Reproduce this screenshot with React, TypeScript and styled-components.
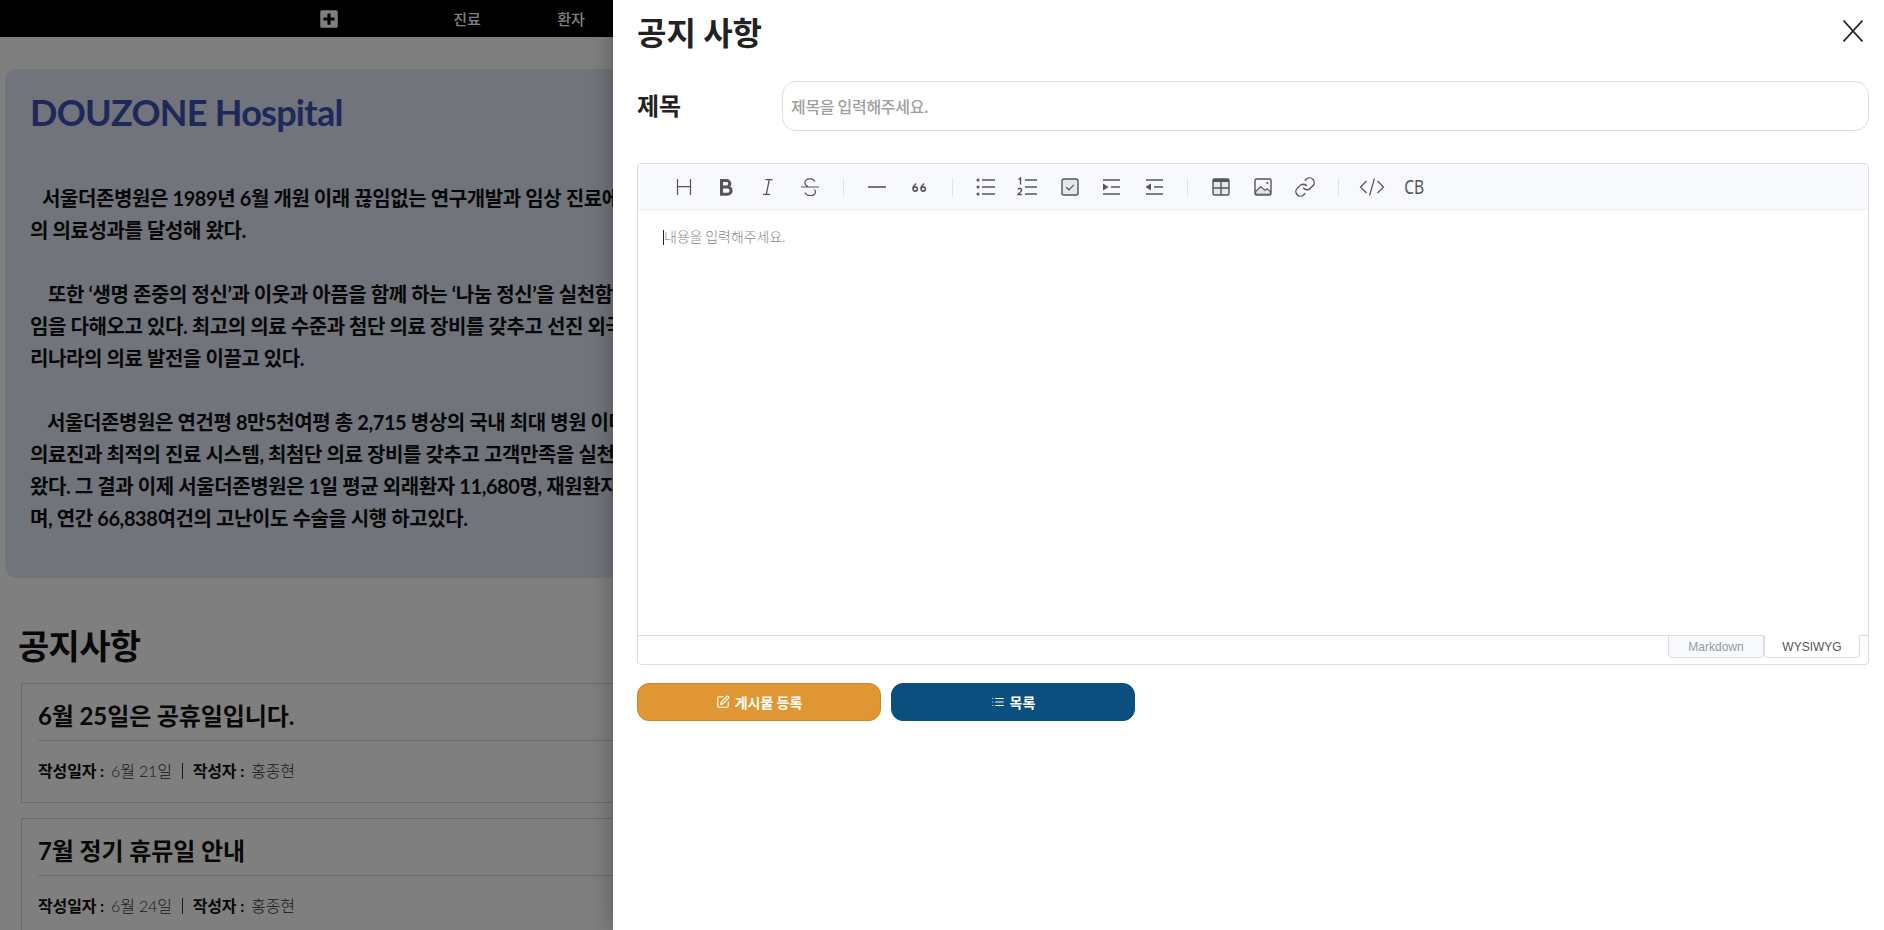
import React from 'react';
import styled, { createGlobalStyle } from 'styled-components';
import { FaPlusSquare } from 'react-icons/fa';
import { LuSquarePen, LuList } from 'react-icons/lu';

const GlobalStyle = createGlobalStyle`
  html, body {
    margin: 0;
    padding: 0;
    height: 100%;
    overflow: hidden;
    background: #fff;
    font-family: Lato, "Noto Sans CJK KR", sans-serif;
  }
  * {
    box-sizing: border-box;
  }
`;

const Screen = styled.div`
  position: relative;
  width: 1884px;
  height: 930px;
  overflow: hidden;
`;

const TopNav = styled.nav`
  display: flex;
  align-items: center;
  height: 37px;
  padding-left: 319px;
  background: #000;
  color: #fff;
`;

const NavLogo = styled.div`
  display: flex;
  margin-right: 76px;
  font-size: 20px;
`;

const NavItem = styled.a`
  width: 104px;
  text-align: center;
  font-size: 15px;
  font-weight: 500;
`;

const Main = styled.main`
  padding: 32px 0 0 5px;
`;

const IntroCard = styled.section`
  width: 1860px;
  height: 509px;
  padding: 21px 25px;
  border-radius: 12px;
  background: #e2e8f6;
`;

const IntroTitle = styled.h1`
  margin: 0 0 48px;
  font-size: 36px;
  line-height: 44px;
  font-weight: 700;
  letter-spacing: -0.75px;
  color: #3f51b5;
`;

const IntroText = styled.p<{ $indent: number }>`
  margin: 0 0 32px;
  font-size: 20px;
  line-height: 32px;
  font-weight: 700;
  letter-spacing: -0.4px;
  white-space: nowrap;
  color: #111;
  text-indent: ${(p) => p.$indent}px;
`;

const NoticeTitle = styled.h2`
  margin: 46px 0 15px 13px;
  font-size: 34px;
  line-height: 44px;
  font-weight: 700;
  letter-spacing: -0.7px;
  color: #111;
`;

const NoticeCard = styled.article`
  width: 1840px;
  height: 120px;
  margin: 0 0 15px 16px;
  padding: 13px 16px 0;
  border: 1px solid #d8d8d8;
  background: #fff;
`;

const NoticeHead = styled.h3`
  margin: 0;
  height: 44px;
  font-size: 24px;
  line-height: 38px;
  font-weight: 700;
  letter-spacing: -0.1px;
  color: #111;
  border-bottom: 1px solid #d8d8d8;
`;

const NoticeMeta = styled.div`
  display: flex;
  align-items: center;
  margin-top: 18px;
  font-size: 16px;
  line-height: 24px;
  font-weight: 300;
  letter-spacing: -0.15px;
  color: #333;
`;

const MetaLabel = styled.b`
  margin-right: 7px;
  font-weight: 700;
  color: #111;
`;

const MetaSep = styled.span`
  width: 1px;
  height: 16px;
  margin: 0 10px;
  background: #333;
`;

const Overlay = styled.div`
  position: absolute;
  inset: 0;
  background: rgba(0, 0, 0, 0.5);
`;

const Drawer = styled.aside`
  position: absolute;
  top: 0;
  right: 0;
  bottom: 0;
  width: 1271px;
  padding: 0 15px 0 24px;
  background: #fff;
  box-shadow: 0 0 24px rgba(0, 0, 0, 0.3);
  font-family: "Noto Sans CJK KR", sans-serif;
`;

const DrawerHead = styled.header`
  display: flex;
  align-items: center;
  justify-content: space-between;
  height: 62px;
  padding-right: 6px;
`;

const DrawerTitle = styled.h2`
  margin: 0;
  font-size: 32px;
  font-weight: 700;
  color: #222;
`;

const CloseButton = styled.button`
  display: flex;
  padding: 0;
  border: 0;
  background: none;
`;

const FieldRow = styled.div`
  display: flex;
  align-items: center;
  margin: 19px 0 32px;
`;

const FieldLabel = styled.label`
  width: 145px;
  padding-bottom: 4px;
  font-size: 24px;
  font-weight: 700;
  color: #222;
`;

const TitleInput = styled.input`
  flex: 1;
  height: 50px;
  padding: 0 8px;
  border: 1px solid #dedede;
  border-radius: 14px;
  outline: none;
  font-family: inherit;
  font-size: 16px;
  font-weight: 500;
  letter-spacing: -0.3px;
  &::placeholder {
    color: #a0a0a0;
  }
`;

const Editor = styled.div`
  height: 502px;
  display: flex;
  flex-direction: column;
  border: 1px solid #dadde6;
  border-radius: 4px;
`;

const Toolbar = styled.div`
  display: flex;
  align-items: center;
  flex: none;
  height: 46px;
  padding: 0 25px;
  border-bottom: 1px solid #ebedf2;
  border-radius: 3px 3px 0 0;
  background: #f7f9fc;
`;

const ToolButton = styled.span`
  display: flex;
  align-items: center;
  justify-content: center;
  width: 32px;
  height: 32px;
  margin: 0 5px;
  color: #555;
`;

const CodeBlockLabel = styled.span`
  font-family: "Noto Sans", sans-serif;
  font-size: 19px;
  font-weight: 400;
  transform: scaleX(0.82);
`;

const ToolDivider = styled.span`
  width: 1px;
  height: 18px;
  margin: 0 12px;
  background: #e1e3e9;
`;

const EditArea = styled.div`
  flex: 1;
  padding: 11px 25px;
  font-size: 14px;
  line-height: 30px;
  font-weight: 300;
  letter-spacing: -0.1px;
  color: #8a8a8a;
`;

const Caret = styled.span`
  display: inline-block;
  width: 1px;
  height: 15px;
  vertical-align: -3px;
  background: #222;
`;

const ModeSwitch = styled.div`
  display: flex;
  justify-content: flex-end;
  flex: none;
  height: 29px;
  padding-right: 8px;
  border-top: 1px solid #dadde6;
`;

const ModeTab = styled.div<{ $active?: boolean }>`
  width: 96px;
  height: 23px;
  margin-top: -1px;
  text-align: center;
  font-family: "Liberation Sans", sans-serif;
  font-size: 12px;
  line-height: 23px;
  color: ${(p) => (p.$active ? '#555' : '#969aa5')};
  background: ${(p) => (p.$active ? '#fff' : '#f7f9fc')};
  border: 1px solid #dadde6;
  border-top-color: ${(p) => (p.$active ? '#fff' : '#dadde6')};
  border-radius: 0 0 4px 4px;
`;

const ActionRow = styled.div`
  display: flex;
  gap: 10px;
  margin-top: 18px;
`;

const ActionButton = styled.button<{ $bg: string; $line: string }>`
  display: flex;
  align-items: center;
  justify-content: center;
  gap: 5px;
  width: 244px;
  height: 38px;
  padding: 0;
  border: 1px solid ${(p) => p.$line};
  border-radius: 12px;
  background: ${(p) => p.$bg};
  color: #fff;
  font-family: inherit;
  font-size: 14px;
  font-weight: 700;
`;

const Icon = ({ children }: { children: React.ReactNode }) => (
  <svg width="32" height="32" viewBox="0 0 32 32" fill="none" stroke="currentColor" strokeWidth="1.4">
    {children}
  </svg>
);

const toolGroups: React.ReactNode[][] = [
  [
    <Icon key="h">
      <path d="M9.5 8v16M22.5 8v16M9.5 15.7h13" strokeWidth="1.2" />
    </Icon>,
    <Icon key="b">
      <path d="M11.5 9.5h5a3.3 3.3 0 0 1 0 6.6h-5zM11.5 16.1h6a3.6 3.6 0 0 1 0 7.2h-6z" strokeWidth="3" />
    </Icon>,
    <Icon key="i">
      <path d="M13.5 8.7h7M11 23.3h7M17.3 8.7l-3 14.6" strokeWidth="1.3" />
    </Icon>,
    <Icon key="s">
      <path d="M7 16h18M21 10.5c-1-2-3-2.7-5-2.7-3 0-5 1.6-5 4 0 1.8 1 3 3 3.8M20.5 18.5c.6.8.9 1.6.9 2.4 0 2.2-2.2 3.6-5.2 3.6-2.4 0-4.3-1-5.2-3" strokeWidth="1.2" />
    </Icon>,
  ],
  [
    <Icon key="hr">
      <path d="M7 16h18" strokeWidth="1.6" />
    </Icon>,
    <Icon key="q">
      <path d="M13 12.5c-1.6 1.3-2.8 3-2.8 5" strokeWidth="1.6" />
      <circle cx="12.2" cy="18" r="2.1" strokeWidth="1.6" />
      <path d="M21 12.5c-1.6 1.3-2.8 3-2.8 5" strokeWidth="1.6" />
      <circle cx="20.2" cy="18" r="2.1" strokeWidth="1.6" />
    </Icon>,
  ],
  [
    <Icon key="ul">
      <path d="M12 9h13M12 16h13M12 23h13" strokeWidth="1.3" />
      <circle cx="8" cy="9" r="1.5" fill="currentColor" stroke="none" />
      <circle cx="8" cy="16" r="1.5" fill="currentColor" stroke="none" />
      <circle cx="8" cy="23" r="1.5" fill="currentColor" stroke="none" />
    </Icon>,
    <Icon key="ol">
      <path d="M13 9h12M13 16h12M13 23h12" strokeWidth="1.3" />
      <path d="M6.5 8.5 8.5 7v6.5" strokeWidth="1.4" />
      <path d="M6 18.5c.5-1.4 3.7-1.4 3.7.5 0 1.4-2.7 2.8-3.7 4.5h4" strokeWidth="1.4" />
    </Icon>,
    <Icon key="task">
      <rect x="8" y="8" width="16" height="16" rx="2" fill="#e4e7ef" strokeWidth="1.4" />
      <path d="M12.2 16.3l2.7 2.5 4.9-5" strokeWidth="1.2" />
    </Icon>,
    <Icon key="indent">
      <path d="M7 9h17M15 16h9M7 23h17" strokeWidth="1.3" />
      <path d="M7 12.5v7l5.5-3.5z" fill="currentColor" stroke="none" />
    </Icon>,
    <Icon key="outdent">
      <path d="M8 9h17M16 16h9M8 23h17" strokeWidth="1.3" />
      <path d="M13 12.5v7l-5.5-3.5z" fill="currentColor" stroke="none" />
    </Icon>,
  ],
  [
    <Icon key="table">
      <rect x="8" y="8" width="16" height="16" rx="1.5" fill="#e4e7ef" strokeWidth="1.4" />
      <path d="M8 9.5h16" strokeWidth="3" />
      <path d="M16 11v13M8 17h16" strokeWidth="1.4" />
    </Icon>,
    <Icon key="image">
      <rect x="8" y="8" width="16" height="16" rx="1.5" strokeWidth="1.4" />
      <path d="M8.7 20.5l5-5 4.3 3.8 2-1.6 3.3 2.8v2.8H8.7z" fill="#e0e3ec" strokeWidth="1.1" />
      <circle cx="20.3" cy="12" r="1.1" fill="currentColor" stroke="none" />
    </Icon>,
    <Icon key="link">
      <g transform="translate(5 5) scale(0.92)" strokeWidth="1.5">
        <path d="M10 13a5 5 0 0 0 7.54.54l3-3a5 5 0 0 0-7.07-7.07l-1.72 1.71" />
        <path d="M14 11a5 5 0 0 0-7.54-.54l-3 3a5 5 0 0 0 7.07 7.07l1.71-1.71" />
      </g>
    </Icon>,
  ],
  [
    <Icon key="code">
      <path d="M10.5 10l-6 6 6 6M21.5 10l6 6-6 6M18.4 7.5l-4.8 17" strokeWidth="1.2" />
    </Icon>,
    <CodeBlockLabel key="cb">CB</CodeBlockLabel>,
  ],
];

const App = () => {
  return (
    <Screen>
      <GlobalStyle />
      <TopNav>
        <NavLogo>
          <FaPlusSquare />
        </NavLogo>
        <NavItem>진료</NavItem>
        <NavItem>환자</NavItem>
      </TopNav>
      <Main>
        <IntroCard>
          <IntroTitle>DOUZONE Hospital</IntroTitle>
          <IntroText $indent={12}>
            서울더존병원은 1989년 6월 개원 이래 끊임없는 연구개발과 임상 진료에 매진하여 세계 수준
            <br />의 의료성과를 달성해 왔다.
          </IntroText>
          <IntroText $indent={18}>
            또한 ‘생명 존중의 정신’과 이웃과 아픔을 함께 하는 ‘나눔 정신’을 실천함
            <br />임을 다해오고 있다. 최고의 의료 수준과 첨단 의료 장비를 갖추고 선진 외국
            <br />리나라의 의료 발전을 이끌고 있다.
          </IntroText>
          <IntroText $indent={17}>
            서울더존병원은 연건평 8만5천여평 총 2,715 병상의 국내 최대 병원 이며
            <br />의료진과 최적의 진료 시스템, 최첨단 의료 장비를 갖추고 고객만족을 실천
            <br />왔다. 그 결과 이제 서울더존병원은 1일 평균 외래환자 11,680명, 재원환자
            <br />며, 연간 66,838여건의 고난이도 수술을 시행 하고있다.
          </IntroText>
        </IntroCard>
        <NoticeTitle>공지사항</NoticeTitle>
        <NoticeCard>
          <NoticeHead>6월 25일은 공휴일입니다.</NoticeHead>
          <NoticeMeta>
            <MetaLabel>작성일자 :</MetaLabel>6월 21일
            <MetaSep />
            <MetaLabel>작성자 :</MetaLabel>홍종현
          </NoticeMeta>
        </NoticeCard>
        <NoticeCard>
          <NoticeHead>7월 정기 휴뮤일 안내</NoticeHead>
          <NoticeMeta>
            <MetaLabel>작성일자 :</MetaLabel>6월 24일
            <MetaSep />
            <MetaLabel>작성자 :</MetaLabel>홍종현
          </NoticeMeta>
        </NoticeCard>
      </Main>
      <Overlay />
      <Drawer>
        <DrawerHead>
          <DrawerTitle>공지 사항</DrawerTitle>
          <CloseButton>
            <svg width="20" height="22" viewBox="0 0 20 22" fill="none" stroke="#222" strokeWidth="1.7">
              <path d="M0.5 0.5l19 21M19.5 0.5l-19 21" />
            </svg>
          </CloseButton>
        </DrawerHead>
        <FieldRow>
          <FieldLabel>제목</FieldLabel>
          <TitleInput placeholder="제목을 입력해주세요." />
        </FieldRow>
        <Editor>
          <Toolbar>
            {toolGroups.map((group, i) => (
              <React.Fragment key={i}>
                {i > 0 && <ToolDivider />}
                {group.map((tool, j) => (
                  <ToolButton key={j}>{tool}</ToolButton>
                ))}
              </React.Fragment>
            ))}
          </Toolbar>
          <EditArea>
            <Caret />
            내용을 입력해주세요.
          </EditArea>
          <ModeSwitch>
            <ModeTab>Markdown</ModeTab>
            <ModeTab $active>WYSIWYG</ModeTab>
          </ModeSwitch>
        </Editor>
        <ActionRow>
          <ActionButton $bg="#e09733" $line="#c4862e">
            <LuSquarePen size={14} />
            게시물 등록
          </ActionButton>
          <ActionButton $bg="#0a4f7e" $line="#0a4f7e">
            <LuList size={14} />
            목록
          </ActionButton>
        </ActionRow>
      </Drawer>
    </Screen>
  );
};

export default App;
